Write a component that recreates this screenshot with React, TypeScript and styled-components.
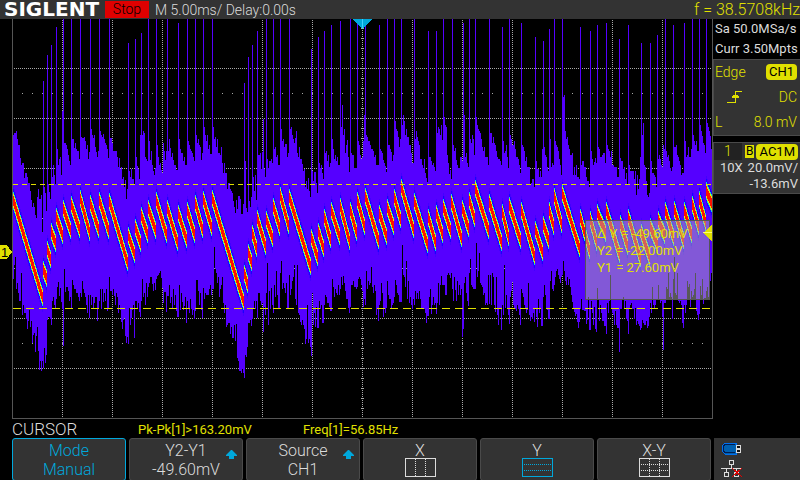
import React from "react";
import styled, { createGlobalStyle } from "styled-components";

const Y = "#e0e000";
const CYAN = "#00a8dc";

const Global = createGlobalStyle`
  * { box-sizing: border-box; }
  body { margin: 0; background: #000; color: #dcdcdc; font-family: Roboto, "Liberation Sans", sans-serif; font-weight: 300; font-size: 14px; }
`;

const Screen = styled.div`
  display: flex;
  flex-direction: column;
  min-height: 100vh;
  background: #000;
`;
const TopBar = styled.header`
  display: flex;
  align-items: center;
  height: 19px;
  padding-left: 4px;
  background: #333;
  white-space: nowrap;
`;
const Brand = styled.h1`
  margin: 0;
  width: 101px;
  font: 700 20px/19px "DejaVu Sans", sans-serif;
  color: #fff;
`;
const RunState = styled.span`
  width: 44px;
  height: 17px;
  margin-right: 6px;
  background: #e00000;
  color: #000;
  line-height: 17px;
  text-align: center;
`;
const Frequency = styled.output`
  margin-left: auto;
  color: ${Y};
  font-size: 16px;
`;
const Main = styled.main`
  display: grid;
  grid-template-columns: minmax(0, 1fr) 87px;
`;
const Plot = styled.section`
  position: relative;
  height: 401px;
`;
const PlotSvg = styled.svg`
  display: block;
  width: 100%;
  height: 401px;
`;
const CursorBox = styled.dl`
  position: absolute;
  right: 3px;
  top: 201px;
  width: 125px;
  height: 80px;
  margin: 0;
  padding: 4px 0 0 11px;
  border: 1px solid #555;
  background: rgba(176, 176, 176, 0.5);
  color: ${Y};
  font-size: 13px;
  font-weight: 400;
  line-height: 17px;
  white-space: nowrap;
`;
const Reading = styled.div`
  display: flex;
  gap: 4px;
  dt, dd { margin: 0; }
`;
const TriggerLevel = styled.svg`
  position: absolute;
  right: 0;
  top: 205px;
  width: 11px;
  height: 18px;
`;
const Side = styled.aside`
  display: flex;
  flex-direction: column;
  white-space: nowrap;
`;
const Acquisition = styled.div`
  height: 40px;
  padding-left: 2px;
  font-size: 13px;
  font-weight: 400;
  line-height: 20px;
`;
const Panel = styled.section`
  border: 1px solid #4a4a4a;
  border-width: 1px 0 1px 1px;
  background: #333;
  & + & { margin-top: 6px; }
`;
const PanelRow = styled.div<{ $h: number; $yellow?: boolean }>`
  display: flex;
  align-items: center;
  justify-content: space-between;
  height: ${(p) => p.$h}px;
  padding: 0 3px 0 1px;
  color: ${(p) => (p.$yellow ? Y : "#dcdcdc")};
`;
const Tag = styled.span`
  padding: 0 3px;
  border-radius: 4px;
  background: ${Y};
  color: #000;
  font-size: 13px;
  font-weight: 400;
  line-height: 16px;
`;
const BandLimit = styled.span`
  margin-left: auto;
  margin-right: 2px;
  padding: 0 1px;
  background: ${Y};
  color: #000;
  font-size: 12px;
  font-weight: 400;
  line-height: 13px;
`;
const ChannelNo = styled.span`
  align-self: stretch;
  width: 28px;
  background: #222;
  text-align: center;
  line-height: 17px;
`;
const ChannelHead = styled(PanelRow)`
  padding: 0 2px 0 0;
`;
const ChannelScale = styled.div`
  padding: 0 2px 1px 6px;
  font-size: 13px;
  font-weight: 400;
  line-height: 16px;
  text-align: right;
`;
const ScaleRow = styled.div`
  display: flex;
  justify-content: space-between;
`;
const Measures = styled.div`
  display: flex;
  align-items: center;
  height: 18px;
  padding-left: 12px;
  color: ${Y};
  font-size: 13px;
  font-weight: 400;
  white-space: nowrap;
`;
const MenuTitle = styled.h2`
  margin: 0;
  width: 126px;
  color: #dcdcdc;
  font-size: 17px;
  font-weight: 300;
  line-height: 18px;
`;
const Measure = styled.span`
  width: 165px;
`;
const Footer = styled.footer`
  display: grid;
  grid-template-columns: repeat(6, minmax(0, 1fr)) 86px;
  gap: 3px;
  height: 42px;
  padding-left: 12px;
`;
const SoftKey = styled.button<{ $active?: boolean }>`
  position: relative;
  display: flex;
  flex-direction: column;
  align-items: center;
  padding: 2px 0 0;
  border: 1px solid ${(p) => (p.$active ? CYAN : "#4a4a4a")};
  border-radius: 3px;
  background: #333;
  color: ${(p) => (p.$active ? CYAN : "#dcdcdc")};
  font: inherit;
  font-size: 16px;
  line-height: 19px;
`;
const UpArrow = styled.svg`
  position: absolute;
  right: 5px;
  top: 11px;
`;
const ModeIcon = styled.svg`
  display: block;
  margin-top: -2px;
`;
const Status = styled.div`
  background: #333;
  padding: 4px 0 0 6px;
`;

/* Envelope samples as "x y" pairs; each y holds until the next x. */
const TOP =
  "13 135 14 133 16 131 17 139 18 145 20 158 21 165 22 163 24 178 25 173 27 177 28 183 30 191 31 200 32 207 33 203 34 207 35 215 36 218 37 197 38 189 39 199 41 195 42 232 43 81 44 187 45 193 46 211 47 55 48 184 49 192 50 199 51 45 52 177 53 165 54 175 55 184 56 27 57 149 58 165 59 159 60 157 61 175 62 111 63 19 64 143 66 145 67 149 68 155 69 161 70 165 71 19 72 139 74 148 75 143 76 149 77 151 79 159 80 19 81 137 82 138 84 137 85 141 86 149 87 145 88 159 89 152 90 19 91 129 92 135 93 138 94 135 95 147 96 152 97 157 98 151 99 19 100 131 101 135 102 137 103 134 104 139 105 143 106 145 107 149 108 158 109 19 110 138 112 143 113 151 117 157 118 167 119 158 120 169 121 167 122 179 123 177 124 187 125 180 126 199 127 189 128 43 129 171 130 177 131 169 132 179 134 185 135 39 136 157 137 166 138 169 139 179 140 135 141 33 142 135 143 131 144 133 145 157 146 159 147 161 148 19 149 141 150 160 151 151 152 165 153 171 154 175 155 168 156 19 157 145 158 157 159 165 160 163 161 170 162 173 163 143 164 151 165 160 166 151 167 19 168 151 169 139 170 148 171 157 172 153 173 160 174 165 176 170 178 23 179 139 180 149 181 153 183 161 184 157 185 165 187 19 188 141 189 145 190 149 191 151 192 153 193 157 194 161 195 19 196 135 197 143 198 139 199 145 200 147 201 160 202 153 203 19 204 127 205 135 206 141 207 135 208 149 209 145 210 154 212 19 213 127 214 139 215 137 216 147 217 139 218 153 220 155 221 147 222 163 223 173 224 163 225 173 227 189 228 183 230 189 231 191 232 193 233 201 234 207 235 213 236 200 237 209 238 196 240 199 241 214 243 204 244 83 245 161 246 208 247 212 248 57 249 201 250 207 251 197 252 45 253 177 254 191 255 175 256 200 257 31 258 155 260 153 261 169 262 152 263 119 264 169 265 177 266 19 267 159 268 168 269 161 271 159 272 163 273 19 274 149 275 147 276 157 277 155 278 165 280 19 281 129 282 141 283 139 284 147 285 144 287 157 288 153 289 19 290 129 291 127 292 135 293 139 294 143 295 138 296 131 297 153 298 157 299 147 300 159 302 164 303 171 304 169 305 187 306 181 307 189 308 178 309 191 310 197 311 49 312 171 313 181 314 172 316 183 317 193 318 37 319 163 320 168 321 165 322 173 323 179 324 31 325 153 326 151 327 161 328 155 329 167 330 163 331 25 332 139 333 149 334 159 335 155 336 161 337 157 338 165 340 21 341 127 342 105 343 135 344 129 345 153 346 145 347 140 348 157 349 172 350 19 351 153 352 155 354 168 357 19 358 141 359 145 360 155 361 159 362 157 363 141 364 115 365 19 366 135 367 137 368 141 370 145 371 149 373 151 374 157 375 155 376 165 379 25 380 149 381 151 382 153 383 160 384 163 385 166 386 172 387 19 388 145 390 149 391 152 392 161 393 155 394 19 395 121 396 129 397 131 398 137 399 147 400 139 401 19 402 125 403 115 404 121 405 135 406 129 407 137 409 145 411 153 412 163 414 19 415 139 416 131 417 137 418 141 419 145 420 159 422 165 423 168 424 159 425 173 426 178 427 182 428 31 429 157 431 161 432 165 433 163 434 167 435 171 436 31 437 133 438 127 439 129 440 135 441 125 442 140 443 19 444 117 445 125 446 127 447 155 448 163 449 174 450 170 451 179 452 19 453 145 454 151 455 148 456 160 457 165 458 168 460 157 462 161 463 23 464 115 465 157 466 153 467 163 468 167 469 19 470 139 471 143 472 135 473 139 474 155 475 19 476 117 477 125 478 129 479 131 480 133 481 139 482 147 483 151 484 147 485 157 488 165 489 19 490 133 492 143 493 137 494 143 495 145 496 151 497 157 498 159 500 161 501 165 502 27 503 141 504 153 505 151 506 145 507 157 508 168 509 19 510 135 511 139 512 145 514 141 515 149 516 157 518 159 519 165 520 173 521 23 522 145 523 147 524 151 525 161 526 157 527 167 530 185 531 183 532 179 534 187 535 37 536 161 537 169 539 177 540 171 541 177 542 149 543 41 544 147 545 155 546 157 547 167 548 171 549 29 550 139 551 167 552 163 553 165 554 19 555 141 556 145 557 147 558 151 559 159 560 165 561 175 562 19 563 97 564 95 565 131 566 139 567 137 568 145 569 149 570 155 572 153 573 175 574 167 575 175 576 165 577 177 579 179 580 27 581 165 582 161 584 167 586 177 587 181 589 187 590 31 591 151 592 159 593 165 594 162 595 158 596 163 597 25 598 147 599 149 600 157 602 155 603 153 605 163 606 23 607 145 608 149 609 151 610 157 611 151 612 165 614 167 617 177 619 39 620 158 621 161 623 169 624 167 625 179 626 173 627 185 628 25 629 165 630 171 634 179 635 171 636 195 637 175 638 189 639 179 640 157 641 43 642 135 643 123 644 165 645 167 646 181 647 195 648 197 649 193 650 43 651 161 652 173 654 175 655 177 656 187 657 35 658 159 659 155 660 159 661 165 662 167 663 145 664 149 665 19 666 151 667 157 668 155 669 161 670 168 671 171 672 167 673 25 674 147 676 145 677 155 678 157 679 161 680 165 681 175 682 173 684 23 685 141 686 157 687 155 688 147 689 157 691 149 692 19 693 135 694 141 695 145 696 141 697 151 699 19 700 125 701 131 702 136 703 143 704 145 705 153 706 19 707 123 708 127 709 131 710 136 711 149";

const BOTTOM =
  "13 279 14 265 15 257 16 289 17 283 18 293 19 301 21 273 22 315 23 305 24 313 26 319 27 329 28 321 29 310 30 327 31 321 32 343 33 335 34 333 35 352 36 336 37 327 38 351 39 370 40 361 41 371 42 361 43 368 44 348 45 363 46 355 47 320 48 317 50 319 51 325 52 301 53 297 54 305 55 308 56 299 57 287 58 282 59 296 60 288 61 302 62 309 63 346 64 269 65 292 66 287 68 291 69 301 70 297 71 309 72 280 73 285 74 289 76 293 78 297 79 301 80 293 81 297 82 281 83 289 84 293 85 297 86 305 87 313 88 295 89 318 90 295 91 305 92 297 93 309 94 303 95 297 97 321 98 309 99 301 100 289 101 309 102 289 103 302 104 293 105 301 106 289 107 311 108 308 109 277 110 291 112 295 113 289 114 296 115 305 116 293 117 297 118 313 119 305 120 310 121 322 122 329 123 320 124 318 125 336 126 343 127 337 128 344 129 308 130 325 131 318 132 310 133 305 134 338 135 301 137 309 138 303 139 312 140 317 141 301 142 279 143 297 144 293 145 305 146 283 147 297 148 287 149 283 150 277 152 284 153 291 154 283 155 290 156 279 157 276 158 275 159 273 160 271 161 278 162 288 163 303 164 292 166 312 167 296 169 285 170 303 171 297 172 308 173 289 174 305 175 295 176 311 177 317 179 285 180 310 181 293 182 302 183 310 184 306 185 297 186 323 187 301 188 309 189 313 190 299 191 309 192 315 193 310 194 319 195 311 196 280 198 291 199 305 200 293 201 310 202 318 203 288 204 299 205 293 206 295 209 289 210 285 211 295 212 289 214 247 215 269 216 273 217 283 218 277 219 297 220 289 221 285 222 277 223 303 224 313 225 305 226 327 227 325 228 323 230 334 231 327 232 338 234 325 235 341 236 324 237 358 238 361 239 371 241 373 242 369 243 373 244 378 245 355 246 357 247 347 248 323 250 320 251 326 252 319 253 309 254 301 255 309 256 301 257 318 258 293 260 301 261 305 262 303 263 332 264 307 265 315 266 293 267 263 268 325 269 291 270 309 271 288 272 305 273 313 274 285 275 297 276 271 277 295 278 309 280 273 281 261 282 289 283 283 284 288 285 293 286 283 287 309 289 275 290 295 291 289 292 281 293 277 294 265 295 299 296 305 297 265 298 313 299 315 300 322 301 325 302 320 303 325 304 329 305 344 306 339 307 305 308 343 309 339 310 347 311 356 312 293 313 325 314 313 315 327 316 307 317 328 319 301 320 309 321 305 322 323 324 305 325 295 326 297 327 303 329 307 330 311 332 279 333 287 334 297 335 289 336 293 337 295 338 285 339 295 340 289 341 277 342 285 343 276 344 283 345 291 346 299 348 308 349 313 350 307 351 285 353 281 354 287 356 289 357 287 358 279 359 277 360 279 361 285 362 291 363 307 364 299 365 305 366 271 367 289 368 281 369 285 370 283 371 267 372 287 373 293 374 285 375 291 376 315 377 309 378 321 379 305 380 301 381 283 382 293 383 317 384 309 385 313 386 308 387 281 388 295 389 299 391 308 392 305 393 303 394 297 395 280 396 285 397 293 398 295 399 302 402 245 403 275 404 277 405 287 406 261 407 299 408 281 409 303 410 297 411 305 412 309 413 299 414 305 415 291 416 299 417 293 418 299 419 291 420 299 421 308 423 309 425 313 426 323 427 316 429 297 430 289 431 314 432 305 433 297 434 305 435 303 436 314 437 303 438 283 439 305 440 285 441 276 442 285 445 295 447 275 448 273 449 275 450 278 451 273 452 289 453 301 454 277 455 290 456 301 457 281 458 295 459 285 460 295 461 289 462 337 463 329 464 283 465 277 466 293 467 301 468 306 469 273 470 259 471 285 472 287 473 289 476 243 477 277 478 271 479 253 480 283 481 285 482 287 483 295 484 293 485 305 486 303 487 305 488 275 489 304 490 275 491 305 492 273 493 277 494 305 495 312 496 277 497 315 498 325 499 308 501 330 502 305 503 315 504 265 505 308 506 295 507 309 508 315 509 324 510 297 511 291 512 282 513 305 514 309 516 311 517 305 518 309 519 315 520 325 521 289 522 293 523 297 524 305 525 309 526 313 527 310 528 283 529 315 530 321 531 317 532 319 533 313 534 322 535 309 536 317 537 327 538 299 539 313 540 308 541 326 543 297 544 285 545 295 546 308 547 310 548 319 550 281 551 271 552 289 553 291 554 285 555 277 556 271 557 269 558 275 559 279 560 283 561 277 562 275 563 261 564 271 565 281 566 285 567 277 568 285 569 279 570 287 571 295 572 302 573 309 574 312 575 316 576 314 577 322 578 328 579 322 580 309 581 299 582 310 584 311 586 324 587 320 588 297 589 330 591 301 592 313 593 325 594 307 595 329 596 332 597 288 598 299 599 321 600 305 601 313 602 321 604 326 606 334 607 303 608 313 609 301 610 275 611 309 612 313 613 315 614 325 615 311 616 325 617 328 619 352 620 309 622 299 623 297 624 309 625 301 626 319 627 321 628 334 629 309 630 305 631 303 632 309 634 319 635 308 636 325 637 321 638 324 639 326 640 330 641 328 642 320 643 323 644 325 646 321 647 328 648 326 649 317 650 303 651 313 652 287 653 305 654 308 655 305 656 300 658 285 659 299 660 303 661 301 662 317 663 350 664 303 666 287 667 289 668 273 669 297 670 293 671 297 672 319 673 279 674 257 675 293 676 295 677 273 678 301 679 303 680 301 681 305 682 323 683 328 684 305 685 313 686 305 687 281 688 287 689 284 690 307 691 291 692 297 693 295 694 289 695 273 696 311 697 315 698 320 699 314 700 286 701 295 702 279 703 304 704 298 706 291 707 287 708 297 709 279 710 281 711 273";

/* Sawtooth ramps: start x, top y, end x, bottom y. */
const RAMPS = [
  [13, 195, 43, 303], [43, 265, 47, 283], [47, 245, 51, 264], [51, 227, 56, 248], [56, 212, 63, 240],
  [63, 203, 71, 235], [71, 199, 80, 235], [80, 193, 90, 238], [90, 198, 99, 235], [99, 195, 109, 236],
  [109, 196, 128, 268], [128, 230, 135, 260], [135, 222, 141, 248], [141, 210, 148, 240], [148, 203, 156, 235],
  [156, 195, 167, 240], [167, 203, 178, 248], [178, 208, 187, 245], [187, 205, 195, 240], [195, 198, 203, 235],
  [203, 194, 212, 233], [212, 193, 244, 307], [244, 268, 248, 290], [248, 247, 252, 268], [252, 228, 257, 254],
  [257, 213, 266, 252], [266, 214, 273, 243], [273, 201, 280, 233], [280, 190, 289, 231], [289, 192, 311, 272],
  [311, 232, 318, 263], [318, 226, 324, 254], [324, 212, 331, 245], [331, 205, 340, 242], [340, 201, 350, 247],
  [350, 205, 357, 238], [357, 195, 365, 232], [365, 191, 379, 246], [379, 208, 387, 242], [387, 202, 394, 232],
  [394, 192, 401, 225], [401, 182, 414, 235], [414, 196, 428, 250], [428, 212, 436, 248], [436, 208, 443, 240],
  [443, 202, 451, 236], [451, 197, 462, 244], [462, 203, 469, 234], [469, 195, 475, 224], [475, 183, 489, 236],
  [489, 197, 502, 248], [502, 207, 509, 243], [509, 200, 521, 246], [521, 205, 535, 262], [535, 224, 543, 258],
  [543, 220, 549, 245], [549, 205, 554, 232], [554, 191, 562, 230], [562, 188, 580, 254], [580, 212, 590, 256],
  [590, 214, 597, 248], [597, 208, 606, 238], [606, 205, 620, 260], [620, 218, 628, 252], [628, 212, 641, 264],
  [641, 228, 650, 262], [650, 222, 658, 250], [658, 215, 665, 240], [665, 205, 674, 243], [674, 204, 684, 246],
  [684, 205, 692, 240], [692, 199, 699, 232], [699, 194, 706, 228], [706, 186, 712, 208],
];

/* Persistence colours, from the rarely hit rim to the core: half height and colour. */
const LAYERS: [number, string][] = [
  [15, "#4400ff"], [12, "#1a00ff"], [9, "#00c8ff"], [8, "#40f080"], [7, "#e8f000"], [5, "#ff1000"],
];

function edge(data: string, end: number) {
  const n = data.split(" ").map(Number);
  const points: [number, number][] = [];
  for (let i = 0; i < n.length; i += 2) {
    points.push([n[i], n[i + 1]], [n[i + 2] ?? end, n[i + 1]]);
  }
  return points;
}

const envelope = [...edge(TOP, 712), ...edge(BOTTOM, 712).reverse()].map((p) => p.join(",")).join(" ");

const band = (half: number) =>
  RAMPS.map(([x1, y1, x2, y2]) => {
    const a = y1 + 4;
    const b = y2 - 4;
    return `M${x1} ${a - half}L${x2} ${b - half}V${b + half}L${x1} ${a + half}Z`;
  }).join("");

const range = (from: number, to: number, step: number) =>
  Array.from({ length: Math.floor((to - from) / step) + 1 }, (_, i) => from + i * step);

const ROWS = range(68, 368, 50);
const COLS = range(62, 662, 50);

const gridPath =
  ROWS.map((y) => `M14 ${y + 0.5}H712`).join("") + COLS.map((x) => `M${x + 0.5} 20V418`).join("");

function Waveform() {
  return (
    <PlotSvg viewBox="0 19 713 401" preserveAspectRatio="none" shapeRendering="crispEdges" role="img" aria-label="Channel 1 waveform">
      <path d={gridPath} fill="none" stroke="#a8a8a8" strokeDasharray="1 1" />
      <path d={range(22, 702, 10).map((x) => `M${x} 93.5h1M${x} 343.5h1`).join("")} stroke="#a8a8a8" />
      <path d={range(28, 408, 10).map((y) => `M361 ${y + 0.5}h3`).join("")} stroke="#a8a8a8" />
      <polygon points={envelope} fill="#5500ff" />
      {LAYERS.map(([half, color]) => (
        <path key={color} d={band(half)} fill={color} />
      ))}
      <path d="M12.5 19V418.5H712.5V19" fill="none" stroke="#555" />
      <path d="M13 184.5H712" stroke={Y} strokeDasharray="5 4" />
      <path d="M13 308.5H712" stroke={Y} strokeDasharray="8 5" />
      <path d="M353 19H372L363 29H362Z" fill={CYAN} />
      <path d="M362.5 19V29" stroke="#40d0ff" />
      <path d="M0 245H7L12 252L7 259H0Z" fill={Y} />
      <text x="1" y="257" fontSize="13" fill="#000" fontFamily="Liberation Sans" fontWeight="400">1</text>
    </PlotSvg>
  );
}

function Up() {
  return (
    <UpArrow width="11" height="10" viewBox="0 0 11 10" aria-hidden="true">
      <path d="M5 0H6L11 5V6H8V9H3V6H0V5Z" fill={CYAN} />
    </UpArrow>
  );
}

function Glyph({ color = "#dcdcdc", cols, rows }: { color?: string; cols?: boolean; rows?: boolean }) {
  return (
    <ModeIcon width="31" height="19" viewBox="0 0 31 19" shapeRendering="crispEdges" fill="none" stroke={color} aria-hidden="true">
      <path d="M.5 .5H30.5V18.5H.5Z" />
      {cols && <path d="M10.5 1V18M20.5 1V18" strokeDasharray="1 1" />}
      {rows && <path d="M2 6.5H30M2 12.5H30" strokeDasharray="1 1" />}
    </ModeIcon>
  );
}

export default function App() {
  return (
    <Screen>
      <Global />
      <TopBar>
        <Brand>SIGLENT</Brand>
        <RunState>Stop</RunState>
        <span>M 5.00ms/ Delay:0.00s</span>
        <Frequency>f = 38.5708kHz</Frequency>
      </TopBar>
      <Main>
        <Plot>
          <Waveform />
          <CursorBox>
            <Reading><dt>Δ Y</dt><dd>= -49.60mV</dd></Reading>
            <Reading><dt>Y2</dt><dd>= -22.00mV</dd></Reading>
            <Reading><dt>Y1</dt><dd>= 27.60mV</dd></Reading>
          </CursorBox>
          <TriggerLevel viewBox="0 0 11 18" shapeRendering="crispEdges" aria-hidden="true">
            <path d="M10 0V18L1 9Z" fill={Y} />
            <path d="M1 8.5H10" stroke="#ffff70" />
          </TriggerLevel>
        </Plot>
        <Side>
          <Acquisition>
            <div>Sa 50.0MSa/s</div>
            <div>Curr 3.50Mpts</div>
          </Acquisition>
          <Panel>
            <PanelRow $h={24} $yellow>Edge<Tag>CH1</Tag></PanelRow>
            <PanelRow $h={25} $yellow>
              <svg width="28" height="14" viewBox="0 0 28 14" shapeRendering="crispEdges" fill="none" stroke={Y} role="img" aria-label="Rising edge">
                <path d="M12 12.5H20.5V1.5H27" />
                <path d="M20 4H21V5H23V6H24V8H17V6H18V5H20Z" fill={Y} stroke="none" />
              </svg>
              DC
            </PanelRow>
            <PanelRow $h={26} $yellow><span>L</span><span>8.0 mV</span></PanelRow>
          </Panel>
          <Panel>
            <ChannelHead $h={17} $yellow>
              <ChannelNo>1</ChannelNo>
              <BandLimit>B</BandLimit>
              <Tag>AC1M</Tag>
            </ChannelHead>
            <ChannelScale>
              <ScaleRow><span>10X</span><span>20.0mV/</span></ScaleRow>
              <div>-13.6mV</div>
            </ChannelScale>
          </Panel>
        </Side>
      </Main>
      <Measures>
        <MenuTitle>CURSOR</MenuTitle>
        <Measure>Pk-Pk[1]&gt;163.20mV</Measure>
        <span>Freq[1]=56.85Hz</span>
      </Measures>
      <Footer>
        <SoftKey $active><span>Mode</span><span>Manual</span></SoftKey>
        <SoftKey><span>Y2-Y1</span><span>-49.60mV</span><Up /></SoftKey>
        <SoftKey><span>Source</span><span>CH1</span><Up /></SoftKey>
        <SoftKey><span>X</span><Glyph cols /></SoftKey>
        <SoftKey><span>Y</span><Glyph rows color={CYAN} /></SoftKey>
        <SoftKey><span>X-Y</span><Glyph cols rows /></SoftKey>
        <Status>
          <svg width="24" height="36" viewBox="0 0 24 36" shapeRendering="crispEdges" fill="none" role="img" aria-label="USB drive connected, network disconnected">
            <path d="M16 1H5L2 4V9L5 12H16Z" fill="#0060b0" stroke="#0070f0" />
            <path d="M15 2.5H5L3.5 4V9L5 10.5H15" stroke="#001c50" />
            <path d="M16 3H21V11H16Z" fill="#dcdcdc" />
            <path d="M17 4H20V6H17ZM17 8H20V10H17Z" fill="#111" />
            <path d="M9.5 18.5H13.5V22.5H9.5ZM11.5 23V26M1 26.5H22M6.5 27V30M16.5 27V30M4.5 30.5H8.5V34.5H4.5ZM14.5 30.5H18.5V34.5H14.5Z" stroke="#dcdcdc" />
            <path d="M12 26L22 35M22 26L12 35" stroke="#e00000" />
          </svg>
        </Status>
      </Footer>
    </Screen>
  );
}
